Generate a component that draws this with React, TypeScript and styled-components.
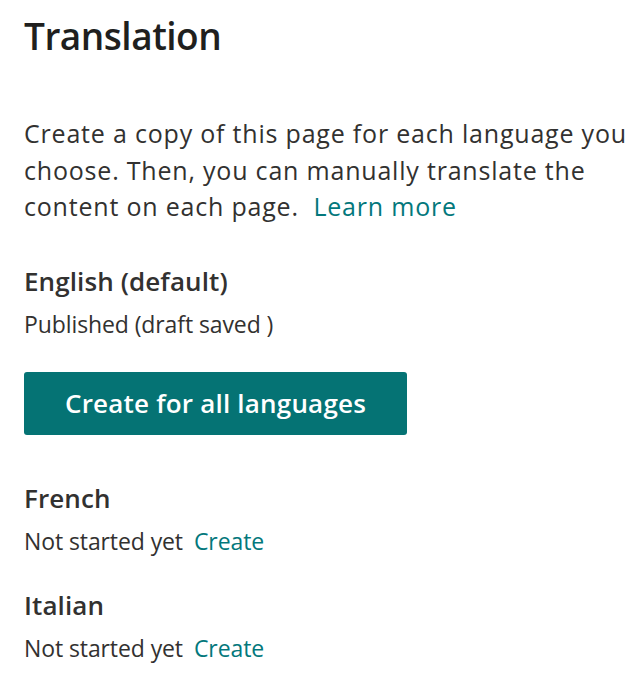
import styled, { createGlobalStyle } from 'styled-components';

const GlobalStyle = createGlobalStyle`
  html, body {
    margin: 0;
    padding: 0;
    background: #ffffff;
  }
  body {
    font-family: 'Open Sans', 'Noto Sans', Arial, sans-serif;
    color: #323130;
  }
`;

const Panel = styled.div`
  width: 642px;
  height: 678px;
  padding: 14px 0 0 24px;
  box-sizing: border-box;
  overflow: hidden;
`;

const Title = styled.h1`
  margin: 0;
  font-size: 37px;
  line-height: 44px;
  font-weight: 600;
  letter-spacing: -0.5px;
  color: #201f1e;
`;

const Intro = styled.p`
  margin: 57px 0 0;
  width: 614px;
  font-size: 25px;
  line-height: 36.5px;
  font-weight: 400;
  letter-spacing: 0.8px;
`;

const Link = styled.a`
  color: #03787c;
  text-decoration: none;
  cursor: pointer;
`;

const Language = styled.section<{ $gap: number }>`
  margin-top: ${(p) => p.$gap}px;
`;

const LangName = styled.h2`
  margin: 0;
  font-size: 26px;
  line-height: 32px;
  font-weight: 600;
  letter-spacing: 0.1px;
`;

const Status = styled.div`
  margin-top: 12px;
  font-size: 23px;
  line-height: 30px;
  letter-spacing: -0.1px;
  display: flex;
  gap: 11px;
`;

const CreateAll = styled.button`
  display: block;
  margin-top: 33px;
  width: 383px;
  height: 63px;
  padding: 0;
  border: none;
  border-radius: 3px;
  background: #057374;
  color: #ffffff;
  font-family: inherit;
  font-size: 26px;
  font-weight: 600;
  letter-spacing: 0.2px;
  cursor: pointer;
`;

const languages = [
  { name: 'French', gap: 47 },
  { name: 'Italian', gap: 33 },
];

export default function App() {
  return (
    <>
      <GlobalStyle />
      <Panel>
        <Title>Translation</Title>
        <Intro>
          Create a copy of this page for each language you choose. Then, you can manually
          translate the content on each page.&nbsp; <Link>Learn more</Link>
        </Intro>
        <Language $gap={40}>
          <LangName>English (default)</LangName>
          <Status>Published (draft saved )</Status>
        </Language>
        <CreateAll>Create for all languages</CreateAll>
        {languages.map((lang) => (
          <Language key={lang.name} $gap={lang.gap}>
            <LangName>{lang.name}</LangName>
            <Status>
              <span>Not started yet</span>
              <Link>Create</Link>
            </Status>
          </Language>
        ))}
      </Panel>
    </>
  );
}
